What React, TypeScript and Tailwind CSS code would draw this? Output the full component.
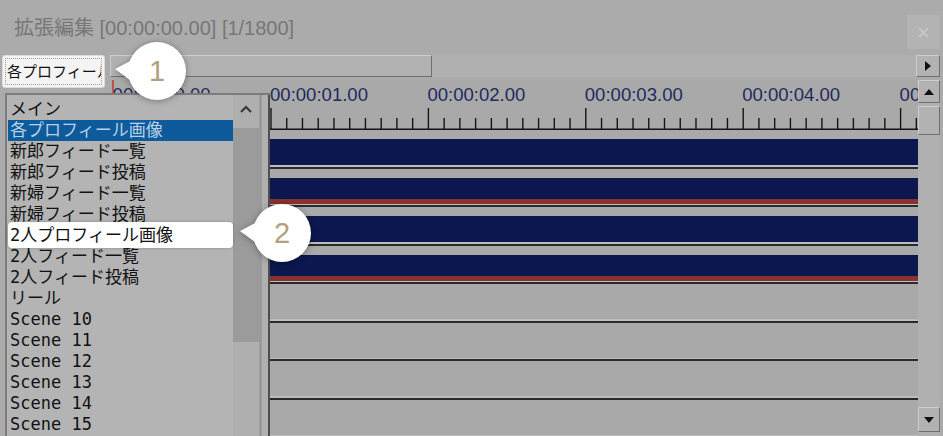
import React from "react";

const listItems = [
  "メイン",
  "各プロフィール画像",
  "新郎フィード一覧",
  "新郎フィード投稿",
  "新婦フィード一覧",
  "新婦フィード投稿",
  "2人プロフィール画像",
  "2人フィード一覧",
  "2人フィード投稿",
  "リール",
  "Scene 10",
  "Scene 11",
  "Scene 12",
  "Scene 13",
  "Scene 14",
  "Scene 15",
];

// layer rows on the timeline: "tall" = plain navy object, "red" = navy with red footer
const layers: (null | "tall" | "red")[] = ["tall", "red", "tall", "red", null, null, null, null];

const listFont = { fontFamily: '"DejaVu Sans Mono", "Noto Sans CJK JP", monospace' };
const uiFont = { fontFamily: '"Liberation Sans", "Noto Sans CJK JP", sans-serif' };

function Bevel({ className = "", children }: { className?: string; children?: React.ReactNode }) {
  return (
    <div
      className={`flex items-center justify-center bg-[#b2b2b2] border border-t-[#cdcdcd] border-l-[#cdcdcd] border-r-[#6f6f6f] border-b-[#6f6f6f] ${className}`}
    >
      {children}
    </div>
  );
}

function Ruler() {
  const x0 = 3.6;
  const sec = 157.4;
  const ticks = [];
  for (let k = 0; k < 52; k++) {
    const x = x0 + k * (sec / 10);
    const major = k % 10 === 0;
    ticks.push(
      <line key={k} x1={x} x2={x} y1={major ? 28 : 38} y2={49} stroke="#151515" strokeWidth={1.4} />
    );
  }
  const labels = [0, 1, 2, 3, 4, 5].map((s) => (
    <text
      key={s}
      x={x0 + s * sec - 1}
      y={20.5}
      fontSize={19}
      textLength={98}
      lengthAdjust="spacingAndGlyphs"
      fill="#1f2a5e"
      style={{ fontFamily: '"Liberation Sans", sans-serif' }}
    >
      00:00:0{s}.00
    </text>
  ));
  return (
    <svg width={808} height={50} className="block shrink-0">
      {labels}
      {ticks}
      <rect x={0} y={48.5} width={808} height={1.6} fill="#151515" />
      <line x1={3} x2={3} y1={0} y2={13} stroke="#c0392b" strokeWidth={1.5} />
    </svg>
  );
}

function Bubble({ left, top, label }: { left: number; top: number; label: string }) {
  // left/top = circle centre
  return (
    <div className="absolute" style={{ left: left - 45, top: top - 33 }}>
      <svg width={80} height={66} className="block drop-shadow-[0_1px_3px_rgba(0,0,0,0.35)]">
        <circle cx={45} cy={33} r={29} fill="#ffffff" />
        <path d="M3 31 L22 21 L22 45 Z" fill="#ffffff" />
      </svg>
      <div
        className="absolute left-[16px] top-[4px] w-[58px] h-[58px] flex items-center justify-center text-[29px] leading-none text-[#b39e7e]"
        style={uiFont}
      >
        {label}
      </div>
    </div>
  );
}

export default function App() {
  return (
    <div className="relative w-[943px] h-[436px] overflow-hidden bg-[#ababab] flex flex-col" style={uiFont}>
      {/* title bar */}
      <div className="h-[55px] shrink-0 flex items-start justify-between">
        <div className="pt-[17px] pl-[14px] text-[20px] leading-[22px] text-[#777777]">
          拡張編集 [00:00:00.00] [1/1800]
        </div>
        <div className="mt-[15px] mr-[3px] w-[33px] h-[34px] bg-[#b3b3b3] flex items-center justify-center text-[22px] text-[#c9c9c9]">
          ×
        </div>
      </div>

      <div className="flex flex-1 min-h-0">
        {/* left column: layer combo */}
        <div className="w-[110px] shrink-0 pl-[2px]">
          <div className="w-[103px] h-[33px] rounded-[3px] border border-[#dcdcdc] bg-[#f4f4f4] p-[2px]">
            <div
              className="h-full border border-dotted border-[#9a9a9a] overflow-hidden whitespace-nowrap pl-[1px] text-[15px] leading-[27px] text-[#111]"
              style={listFont}
            >
              各プロフィール
            </div>
          </div>
        </div>

        {/* right column: scrollbar + timeline */}
        <div className="flex-1 flex flex-col min-h-0">
          <div className="h-[22px] shrink-0 flex pr-[3px]">
            <Bevel className="w-[322px] h-full" />
            <div className="flex-1 bg-[#b0b0b0]" />
            <Bevel className="w-[24px] h-full">
              <svg width={8} height={10}>
                <path d="M1 0 L7 5 L1 10 Z" fill="#111" />
              </svg>
            </Bevel>
          </div>

          <div className="mt-[3px] flex flex-1 min-h-0">
            <div className="w-[808px] shrink-0 flex flex-col bg-[#a9a9a9] overflow-hidden">
              <Ruler />
              {layers.map((kind, i) => (
                <div key={i} className="h-[38.5px] shrink-0 flex flex-col justify-end">
                  {kind === "tall" && <div className="h-[26px] bg-[#0b174e]" />}
                  {kind === "red" && (
                    <>
                      <div className="h-[21px] bg-[#0b174e]" />
                      <div className="h-[5px] bg-[#8a3131]" />
                    </>
                  )}
                  <div className="h-[1.5px] bg-[#bdbdbd]" />
                  <div className="h-[2px] bg-[#2a2a2a]" />
                </div>
              ))}
            </div>

            {/* vertical scrollbar */}
            <div className="w-[22px] shrink-0 flex flex-col bg-[#b0b0b0] pb-[4px]">
              <Bevel className="h-[23px]">
                <svg width={10} height={6}>
                  <path d="M0 6 L5 0 L10 6 Z" fill="#111" />
                </svg>
              </Bevel>
              <Bevel className="mt-[3px] h-[29px]" />
              <div className="flex-1" />
              <Bevel className="h-[25px]">
                <svg width={10} height={6}>
                  <path d="M0 0 L10 0 L5 6 Z" fill="#111" />
                </svg>
              </Bevel>
            </div>
          </div>
        </div>
      </div>

      {/* dropped-down layer list */}
      <div className="absolute left-[5px] top-[93px] w-[265px] h-[346px] flex border-t-2 border-l-2 border-[#7c7c7c] bg-[#b4b4b4]">
        <div className="w-[226px] pt-[3.5px] pl-[1px]" style={listFont}>
          {listItems.map((t, i) => {
            if (i === 1) {
              return (
                <div key={t} className="h-[21px] bg-[#0e5b9b] px-[2px] text-[17px] leading-[21px] text-[#b8d0e8] whitespace-nowrap">
                  {t}
                </div>
              );
            }
            if (i === 6) {
              return (
                <div key={t} className="relative h-[21px]">
                  <div className="absolute -top-[3px] -bottom-[2px] left-0 right-0 rounded-[4px] bg-white shadow-[0_0_3px_rgba(0,0,0,0.25)]" />
                  <div className="relative px-[2px] text-[17px] leading-[21px] text-[#111] whitespace-nowrap">{t}</div>
                </div>
              );
            }
            return (
              <div key={t} className="h-[21px] px-[2px] text-[17px] leading-[21px] text-[#111] whitespace-nowrap">
                {t}
              </div>
            );
          })}
        </div>
        <div className="w-[26px] flex flex-col bg-[#afafaf]">
          <div className="h-[33px] flex items-center justify-center pb-[6px]">
            <svg width={12} height={8}>
              <path d="M1 7 L6 2 L11 7" fill="none" stroke="#3a3a3a" strokeWidth={2.2} />
            </svg>
          </div>
          <div className="h-[214px] bg-[#9b9b9b]" />
        </div>
        <div className="w-[3px] bg-[#9a9a9a]" />
        <div className="w-[6px] bg-[#b0b0b0]" />
        <div className="w-[2px] bg-[#4e4e4e]" />
      </div>

      {/* callouts */}
      <Bubble left={157} top={71} label="1" />
      <Bubble left={282} top={233} label="2" />
    </div>
  );
}
